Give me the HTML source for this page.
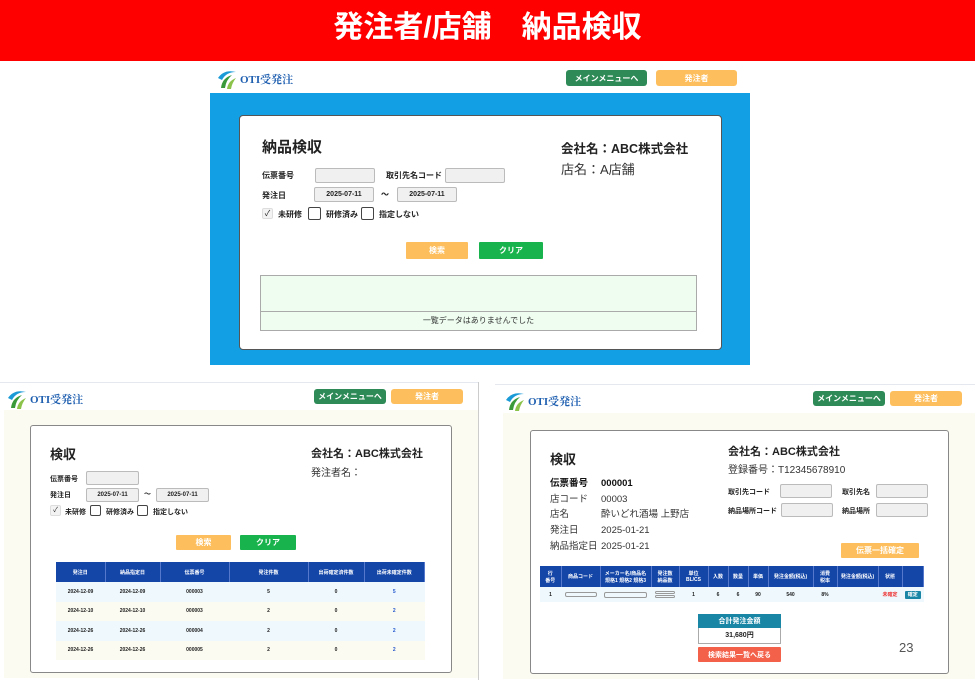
<!DOCTYPE html>
<html><head><meta charset="utf-8"><style>
*{margin:0;padding:0;box-sizing:border-box}
body{width:975px;height:681px;position:relative;background:#fff;font-family:"Liberation Sans","Noto Sans CJK JP",sans-serif;overflow:hidden;color:#222}
.a{position:absolute}
.b{font-weight:bold}
.btn{position:absolute;border-radius:3px;color:#fff;font-weight:bold;font-size:8px;display:flex;align-items:center;justify-content:center}
.g{background:#2e8b57}.o{background:#fdbf5e}.gr{background:#19b34d}
.inp{position:absolute;background:#f0f0f0;border:1px solid #bbb;border-radius:2px;font-size:7px;font-weight:bold;display:flex;align-items:center;justify-content:center}
.cb{position:absolute;width:11px;height:11px;border:1px solid #444;border-radius:2px;background:#fff}
.lbl{position:absolute;font-size:8px;font-weight:bold;white-space:nowrap}
.logo{position:absolute;display:flex;align-items:center}
.logo span{color:#1f5fb0;font-family:"Liberation Serif","Noto Serif CJK SC",serif;font-weight:bold;font-size:11px;margin-left:2px}
table{border-collapse:collapse;position:absolute}
td,th{text-align:center;font-size:5px;font-weight:bold;padding:0}
th{background:#1446a8;color:#fff;border-right:1px solid #5577cc}
</style></head><body>
<div class="a" style="left:0;top:1;width:975px;height:61px;background:#ff0000"></div>
<div class="a b" style="left:0;top:10px;width:975px;text-align:center;color:#fff;font-size:30px;line-height:36px">発注者/店舗　納品検収</div>

<!-- TOP -->
<div class="a" style="left:210px;top:63px;width:540px;height:30px;background:#fff"></div>
<div class="logo" style="left:216px;top:68px"><svg width="22" height="22" viewBox="0 0 22 22"><path d="M2 10 Q8 1 20 4 Q10 4 6 12Z" fill="#1a9bd7"/><path d="M5 20 Q6 10 16 7 Q10 12 9 20Z" fill="#3a9a3a"/><path d="M11 21 Q12 13 20 10 Q16 15 15 21Z" fill="#8bc34a"/></svg><span>OTI受発注</span></div>
<div class="btn g" style="left:566px;top:70px;width:81px;height:16px">メインメニューへ</div>
<div class="btn o" style="left:656px;top:70px;width:81px;height:16px">発注者</div>
<div class="a" style="left:210px;top:93px;width:540px;height:272px;background:#139fe3"></div>
<div class="a" style="left:239px;top:115px;width:483px;height:235px;background:#fff;border:1px solid #555;border-radius:4px"></div>
<div class="a b" style="left:262px;top:136px;font-size:15px">納品検収</div>
<div class="a b" style="left:561px;top:138px;font-size:12.5px">会社名：ABC株式会社</div>
<div class="a" style="left:561px;top:159px;font-size:13px;color:#333">店名：A店舗</div>
<div class="lbl" style="left:262px;top:170px">伝票番号</div>
<div class="inp" style="left:315px;top:168px;width:60px;height:15px"></div>
<div class="lbl" style="left:386px;top:170px">取引先名コード</div>
<div class="inp" style="left:445px;top:168px;width:60px;height:15px"></div>
<div class="lbl" style="left:262px;top:190px">発注日</div>
<div class="inp" style="left:314px;top:187px;width:60px;height:15px">2025-07-11</div>
<div class="lbl" style="left:381px;top:189px">～</div>
<div class="inp" style="left:397px;top:187px;width:60px;height:15px">2025-07-11</div>
<div class="cb" style="left:262px;top:208px;border-color:#ddd;background:#f3f3f3;font-size:8px;text-align:center;line-height:9px">✓</div>
<div class="lbl" style="left:278px;top:209px">未研修</div>
<div class="cb" style="left:308px;top:207px;width:13px;height:13px"></div>
<div class="lbl" style="left:326px;top:209px">研修済み</div>
<div class="cb" style="left:361px;top:207px;width:13px;height:13px"></div>
<div class="lbl" style="left:379px;top:209px">指定しない</div>
<div class="btn o" style="left:406px;top:242px;width:62px;height:17px;border-radius:1px">検索</div>
<div class="btn gr" style="left:479px;top:242px;width:64px;height:17px;border-radius:1px">クリア</div>
<div class="a" style="left:260px;top:275px;width:437px;height:56px;background:#eefdf0;border:1px solid #aaa"></div>
<div class="a" style="left:260px;top:311px;width:437px;height:1px;background:#aaa"></div>
<div class="a" style="left:260px;top:315px;width:437px;text-align:center;font-size:8px;color:#333">一覧データはありませんでした</div>

<!-- BOTTOM LEFT -->
<div class="a" style="left:0;top:382px;width:478px;height:1px;background:#e6e8f0"></div>
<div class="a" style="left:478px;top:382px;width:1px;height:298px;background:#ccc"></div>
<div class="logo" style="left:6px;top:388px"><svg width="22" height="22" viewBox="0 0 22 22"><path d="M2 10 Q8 1 20 4 Q10 4 6 12Z" fill="#1a9bd7"/><path d="M5 20 Q6 10 16 7 Q10 12 9 20Z" fill="#3a9a3a"/><path d="M11 21 Q12 13 20 10 Q16 15 15 21Z" fill="#8bc34a"/></svg><span>OTI受発注</span></div>
<div class="btn g" style="left:314px;top:389px;width:72px;height:15px">メインメニューへ</div>
<div class="btn o" style="left:391px;top:389px;width:72px;height:15px">発注者</div>
<div class="a" style="left:4px;top:410px;width:474px;height:268px;background:#fcfbf1"></div>
<div class="a" style="left:30px;top:425px;width:422px;height:248px;background:#fff;border:1px solid #888;border-radius:3px"></div>
<div class="a b" style="left:50px;top:444px;font-size:13px">検収</div>
<div class="a b" style="left:311px;top:445px;font-size:11px">会社名：ABC株式会社</div>
<div class="a" style="left:311px;top:464px;font-size:10px;color:#333">発注者名：</div>
<div class="lbl" style="left:50px;top:474px;font-size:7px">伝票番号</div>
<div class="inp" style="left:86px;top:471px;width:53px;height:14px"></div>
<div class="lbl" style="left:50px;top:490px;font-size:7px">発注日</div>
<div class="inp" style="left:86px;top:488px;width:53px;height:14px;font-size:6px">2025-07-11</div>
<div class="lbl" style="left:144px;top:489px;font-size:7px">～</div>
<div class="inp" style="left:156px;top:488px;width:53px;height:14px;font-size:6px">2025-07-11</div>
<div class="cb" style="left:50px;top:505px;border-color:#ddd;background:#f3f3f3;font-size:7px;text-align:center;line-height:9px">✓</div>
<div class="lbl" style="left:65px;top:507px;font-size:7px">未研修</div>
<div class="cb" style="left:90px;top:505px"></div>
<div class="lbl" style="left:106px;top:507px;font-size:7px">研修済み</div>
<div class="cb" style="left:137px;top:505px"></div>
<div class="lbl" style="left:153px;top:507px;font-size:7px">指定しない</div>
<div class="btn o" style="left:176px;top:535px;width:55px;height:15px;border-radius:1px">検索</div>
<div class="btn gr" style="left:240px;top:535px;width:56px;height:15px;border-radius:1px">クリア</div>
<table style="left:56px;top:562px;width:369px">
<tr style="height:20px"><th style="width:49px">発注日</th><th style="width:55px">納品指定日</th><th style="width:69px">伝票番号</th><th style="width:79px">発注件数</th><th style="width:56px">出荷確定済件数</th><th>出荷未確定件数</th></tr>
<tr style="height:19.5px;background:#eef8fd"><td>2024-12-09</td><td>2024-12-09</td><td>000003</td><td>5</td><td>0</td><td style="color:#2255cc">5</td></tr>
<tr style="height:19.5px;background:#fcfbf1"><td>2024-12-10</td><td>2024-12-10</td><td>000003</td><td>2</td><td>0</td><td style="color:#2255cc">2</td></tr>
<tr style="height:19.5px;background:#eef8fd"><td>2024-12-26</td><td>2024-12-26</td><td>000004</td><td>2</td><td>0</td><td style="color:#2255cc">2</td></tr>
<tr style="height:19.5px;background:#fcfbf1"><td>2024-12-26</td><td>2024-12-26</td><td>000005</td><td>2</td><td>0</td><td style="color:#2255cc">2</td></tr>
</table>

<!-- BOTTOM RIGHT -->
<div class="a" style="left:495px;top:384px;width:480px;height:1px;background:#e6e8f0"></div>
<div class="logo" style="left:504px;top:390px"><svg width="22" height="22" viewBox="0 0 22 22"><path d="M2 10 Q8 1 20 4 Q10 4 6 12Z" fill="#1a9bd7"/><path d="M5 20 Q6 10 16 7 Q10 12 9 20Z" fill="#3a9a3a"/><path d="M11 21 Q12 13 20 10 Q16 15 15 21Z" fill="#8bc34a"/></svg><span>OTI受発注</span></div>
<div class="btn g" style="left:813px;top:391px;width:72px;height:15px">メインメニューへ</div>
<div class="btn o" style="left:890px;top:391px;width:72px;height:15px">発注者</div>
<div class="a" style="left:503px;top:413px;width:472px;height:266px;background:#fcfbf1"></div>
<div class="a" style="left:530px;top:430px;width:419px;height:244px;background:#fff;border:1px solid #888;border-radius:3px"></div>
<div class="a b" style="left:550px;top:449px;font-size:13px">検収</div>
<div class="a b" style="left:728px;top:443px;font-size:11px">会社名：ABC株式会社</div>
<div class="a" style="left:728px;top:461px;font-size:10px;color:#333">登録番号：T12345678910</div>
<div class="a" style="left:550px;top:476px;font-size:9.5px;line-height:15.7px;color:#333">
<div><b style="display:inline-block;width:51px;color:#111">伝票番号</b><b style="color:#111">000001</b></div>
<div><span style="display:inline-block;width:51px">店コード</span>00003</div>
<div><span style="display:inline-block;width:51px">店名</span>酔いどれ酒場 上野店</div>
<div><span style="display:inline-block;width:51px">発注日</span>2025-01-21</div>
<div><span style="display:inline-block;width:51px">納品指定日</span>2025-01-21</div>
</div>
<div class="lbl" style="left:728px;top:487px;font-size:7px">取引先コード</div>
<div class="inp" style="left:780px;top:484px;width:52px;height:14px"></div>
<div class="lbl" style="left:842px;top:487px;font-size:7px">取引先名</div>
<div class="inp" style="left:876px;top:484px;width:52px;height:14px"></div>
<div class="lbl" style="left:728px;top:506px;font-size:7px">納品場所コード</div>
<div class="inp" style="left:781px;top:503px;width:52px;height:14px"></div>
<div class="lbl" style="left:842px;top:506px;font-size:7px">納品場所</div>
<div class="inp" style="left:876px;top:503px;width:52px;height:14px"></div>
<div class="btn o" style="left:841px;top:543px;width:78px;height:15px;border-radius:1px">伝票一括確定</div>
<table style="left:540px;top:566px;width:384px">
<tr style="height:21px"><th style="width:21px">行<br>番号</th><th style="width:39px">商品コード</th><th style="width:51px">メーカー名/商品名<br>規格1 規格2 規格3</th><th style="width:28px">発注数<br>納品数</th><th style="width:29px">単位<br>BL/CS</th><th style="width:20px">入数</th><th style="width:20px">数量</th><th style="width:20px">単価</th><th style="width:45px">発注金額(税込)</th><th style="width:24px">消費<br>税率</th><th style="width:41px">発注金額(税込)</th><th style="width:24px">状態</th><th></th></tr>
<tr style="height:15px;background:#eef8fd"><td>1</td><td><div style="margin:auto;width:32px;height:5px;border:1px solid #999;border-radius:2px"></div></td><td><div style="margin:auto;width:43px;height:6px;border:1px solid #999;border-radius:2px"></div></td><td><div style="margin:auto;width:20px;height:3px;border:1px solid #999;border-radius:2px"></div><div style="margin:1px auto 0;width:20px;height:3px;border:1px solid #999;border-radius:2px"></div></td><td>1</td><td>6</td><td>6</td><td>90</td><td>540</td><td>8%</td><td></td><td style="color:#e33">未確定</td><td><div style="margin:auto;width:16px;height:8px;background:#1a86a6;border-radius:1px;color:#fff">確定</div></td></tr>
</table>
<div class="a" style="left:698px;top:614px;width:83px;height:30px;border:1px solid #aaa;background:#fff"></div>
<div class="btn" style="left:698px;top:614px;width:83px;height:14px;background:#1a86a6;border-radius:0;font-size:7px">合計発注金額</div>
<div class="a b" style="left:698px;top:630px;width:83px;text-align:center;font-size:7px">31,680円</div>
<div class="btn" style="left:698px;top:647px;width:83px;height:15px;background:#f4614a;border-radius:1px;font-size:7px">検索結果一覧へ戻る</div>
<div class="a" style="left:899px;top:640px;font-size:13px;color:#555">23</div>
</body></html>
